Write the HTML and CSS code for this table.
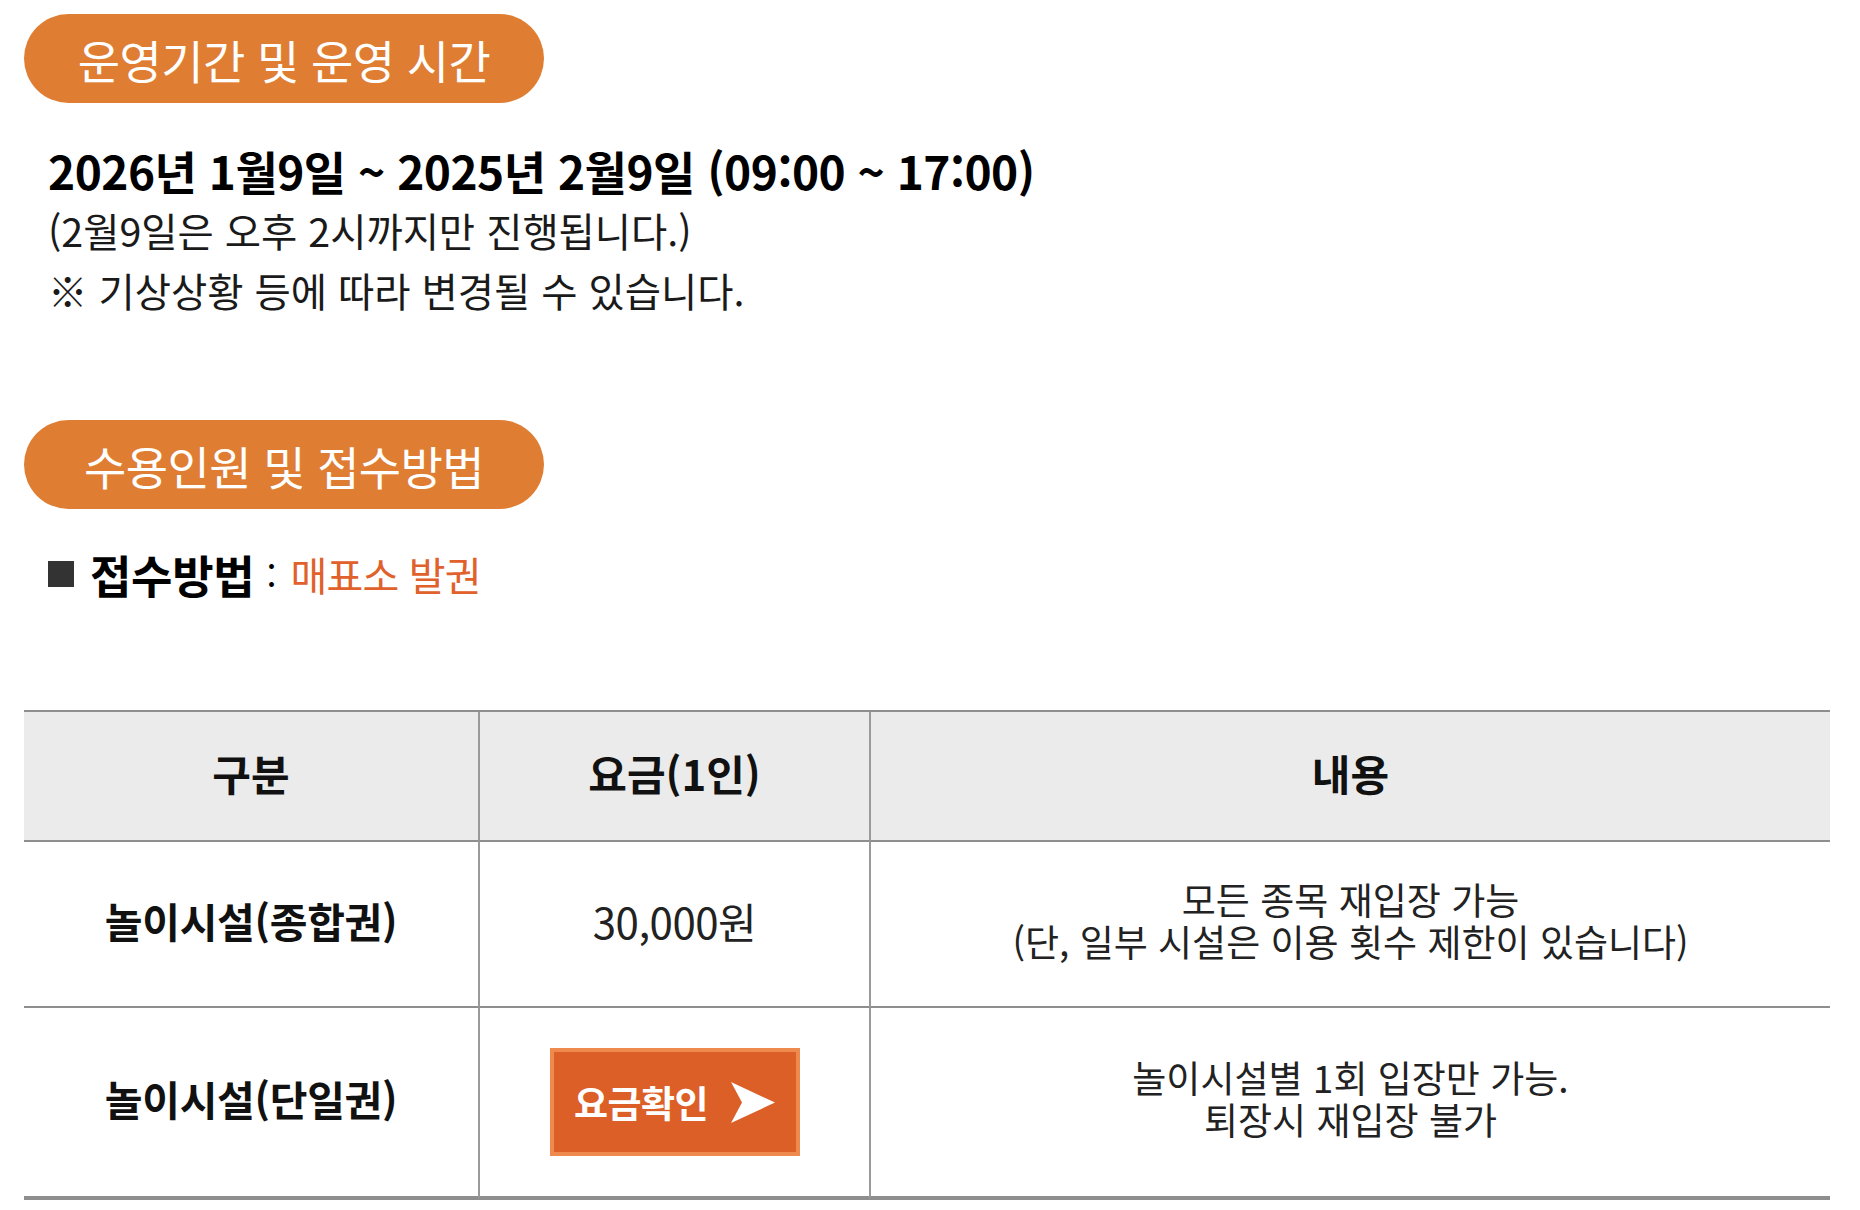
FILE: index.html
```html
<!DOCTYPE html>
<html lang="ko">
<head>
<meta charset="utf-8">
<title>운영기간 및 접수방법</title>
<link rel="stylesheet" href="styles.css">
</head>
<body>
<div class="page">
  <section class="sec">
    <h2 class="pill pill-time">운영기간 및 운영 시간</h2>
    <div class="period">
      <p class="period-main">2026년 1월9일 ~ 2025년 2월9일 (09:00 ~ 17:00)</p>
      <p class="period-note">(2월9일은 오후 2시까지만 진행됩니다.)</p>
      <p class="period-note">※ 기상상황 등에 따라 변경될 수 있습니다.</p>
    </div>
  </section>
  <section class="sec sec-entry">
    <h2 class="pill pill-entry">수용인원 및 접수방법</h2>
    <p class="method"><span class="sq"></span><strong class="method-key">접수방법</strong><span class="colon">:</span><span class="method-val">매표소 발권</span></p>
  </section>
  <table class="fee">
    <colgroup>
      <col class="c1"><col class="c2"><col class="c3">
    </colgroup>
    <thead>
      <tr><th>구분</th><th class="bl">요금(1인)</th><th class="bl">내용</th></tr>
    </thead>
    <tbody>
      <tr class="r1">
        <td class="label">놀이시설(종합권)</td>
        <td class="bl price">30,000원</td>
        <td class="bl desc"><span class="ln">모든 종목 재입장 가능</span><span class="ln">(단, 일부 시설은 이용 횟수 제한이 있습니다)</span></td>
      </tr>
      <tr class="r2">
        <td class="label">놀이시설(단일권)</td>
        <td class="bl btn-cell"><a class="btn" href="#">요금확인<svg class="arrow" viewBox="0 0 44 41" width="44" height="41"><path d="M0 0 L44 20.5 L0 41 L11 20.5 Z" fill="#fff"/></svg></a></td>
        <td class="bl desc"><span class="ln">놀이시설별 1회 입장만 가능.</span><span class="ln">퇴장시 재입장 불가</span></td>
      </tr>
    </tbody>
  </table>
</div>
</body>
</html>
```
FILE: styles.css
```css
html, body {
  margin: 0;
  padding: 0;
  background: #fff;
}
body {
  font-family: "Noto Sans CJK KR", "Noto Sans", sans-serif;
  color: #111;
}
.page {
  width: 1806px;
  padding: 14px 0 0 24px;
}
.pill {
  margin: 0;
  width: 520px;
  height: 89px;
  border-radius: 45px;
  background: #df7e33;
  color: #fff;
  font-weight: 400;
  font-size: 46px;
  letter-spacing: -0.6px;
  display: flex;
  align-items: center;
  justify-content: center;
}
.sec-entry { margin-top: 100px; }
.period {
  margin-top: 37px;
  padding-left: 24px;
}
.period p {
  margin: 0;
  line-height: 60px;
}
.period-main {
  font-size: 46px;
  font-weight: 700;
  color: #000;
  letter-spacing: -0.5px;
}
.period-note {
  font-size: 39.4px;
  color: #1a1a1a;
}
.method {
  margin: 40px 0 0;
  padding-left: 24px;
  height: 50px;
  display: flex;
  align-items: center;
}
.sq {
  width: 26px;
  height: 26px;
  background: #333;
  margin-right: 16px;
}
.method-key {
  font-size: 45px;
  font-weight: 700;
  color: #000;
  letter-spacing: -0.3px;
}
.colon {
  font-size: 36px;
  margin: 0 14px 0 12px;
  color: #000;
}
.method-val {
  font-size: 40px;
  letter-spacing: -0.8px;
  color: #e0612b;
}
.fee {
  margin-top: 111px;
  width: 1806px;
  border-collapse: separate;
  border-spacing: 0;
  table-layout: fixed;
  border-top: 2px solid #8e8e8e;
}
.c1 { width: 454px; }
.c2 { width: 391px; }
.c3 { width: 961px; }
.fee th, .fee td {
  box-sizing: border-box;
  padding: 0 0 8px;
  text-align: center;
  vertical-align: middle;
  border-bottom: 2px solid #8e8e8e;
}
.fee .bl { border-left: 2px solid #9a9a9a; }
.fee th {
  height: 130px;
  padding-bottom: 8px;
  background: #ebebeb;
  font-size: 42px;
  font-weight: 700;
  color: #111;
}
.r1 td { height: 166px; }
.r2 td { height: 192px; border-bottom-width: 4px; }
.fee td.btn-cell { padding: 0; }
.label {
  font-size: 41px;
  font-weight: 700;
  color: #111;
  letter-spacing: -0.3px;
}
.price {
  font-size: 42px;
  color: #222;
  letter-spacing: -0.5px;
}
.desc {
  font-size: 37px;
  color: #222;
}
.ln {
  display: block;
  height: 42px;
  line-height: 42px;
}
.btn {
  display: inline-flex;
  align-items: center;
  justify-content: center;
  gap: 23px;
  box-sizing: border-box;
  width: 250px;
  height: 108px;
  border: 4px solid #ef8a4e;
  background: #dc5f28;
  color: #fff;
  font-size: 37px;
  font-weight: 700;
  letter-spacing: -0.5px;
  text-decoration: none;
  vertical-align: middle;
}
.arrow { display: block; }
```
